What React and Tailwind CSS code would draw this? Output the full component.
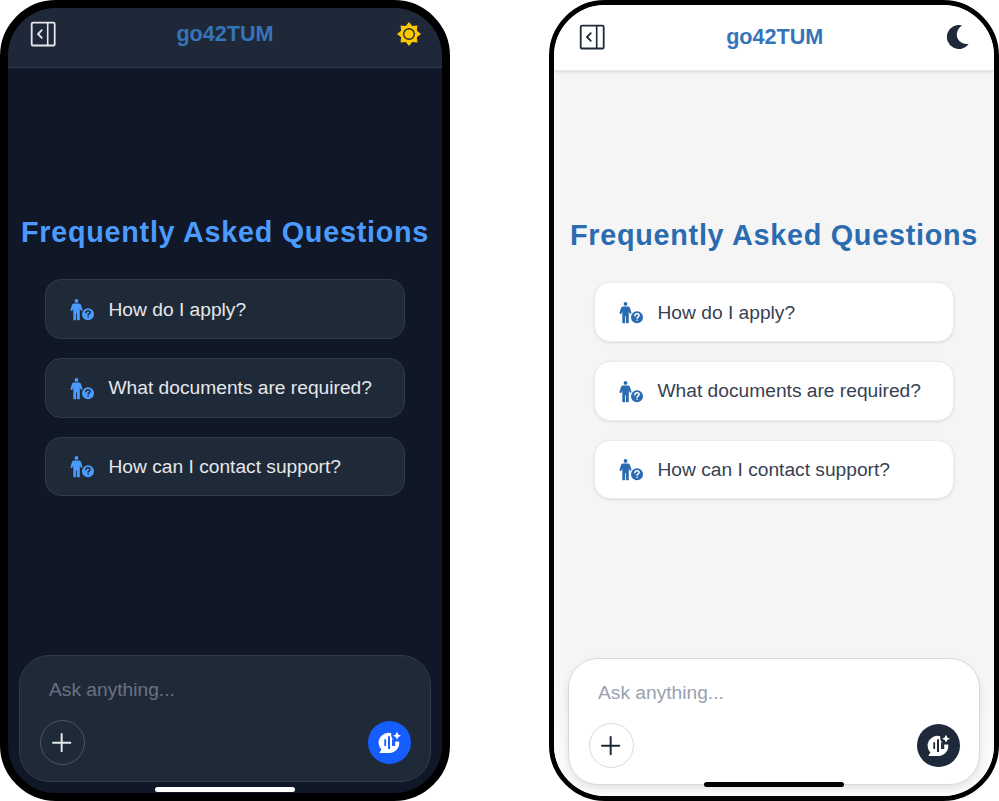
import React from "react";
import { GoPlus } from "react-icons/go";

const questions = ["How do I apply?", "What documents are required?", "How can I contact support?"];

const themes = {
  dark: {
    frame: "border-8 bg-[#101726]",
    header: "h-[60px] border-b border-[#2e3a4b] bg-[#1f2838] px-[23px] pb-[8px]",
    toggle: "text-[#e5e7eb]",
    heading: "mt-[145px] text-[#4b9bff]",
    card: "border-[#303c4c] bg-[#1f2a38] text-[#e5e7eb]",
    icon: "text-[#4b9bff]",
    mark: "stroke-[#1f2a38]",
    footer: "px-[11px] pb-[11px]",
    input: "border-[#303c4c] bg-[#1f2a38]",
    placeholder: "text-[#6a7282]",
    plus: "border-[#4a5565] text-[#e5e7eb]",
    voice: "bg-[#155dfc]",
    bar: "bottom-[1px] bg-white",
  },
  light: {
    frame: "border-[5px] bg-[#f5f5f5]",
    header: "h-[66px] border-b border-[#e8eaed] bg-white px-[26px] pb-[2px] shadow-[0_1px_3px_rgba(0,0,0,0.12)]",
    toggle: "text-[#1e2939]",
    heading: "mt-[145px] text-[#2b6cb0]",
    card: "border-[#e9ebee] bg-white text-[#364153] shadow-[0_1px_3px_rgba(0,0,0,0.1)]",
    icon: "text-[#2b6cb0]",
    mark: "stroke-white",
    footer: "bg-linear-to-b from-[#f5f5f5] to-[#fdfdfd] px-[14px] pb-[11px]",
    input: "border-[#d6dae1] bg-white shadow-[0_4px_8px_rgba(0,0,0,0.1)]",
    placeholder: "text-[#99a1af]",
    plus: "border-[#d6d9e0] text-[#1e2939]",
    voice: "bg-[#1e2939]",
    bar: "bottom-[9px] bg-black",
  },
};

function SidebarIcon({ className }) {
  return (
    <svg viewBox="0 0 24 24" fill="none" stroke="currentColor" strokeWidth="1.8" className={className}>
      <rect x="0.7" y="0.7" width="23" height="22.8" rx="1.3" />
      <path d="M16.7 1V23" strokeWidth="1.6" />
      <path d="M10.8 8.2L7 12L10.8 15.8" strokeLinecap="round" strokeLinejoin="round" />
    </svg>
  );
}

function SunIcon({ className }) {
  return (
    <svg viewBox="-12 -12 24 24" fill="currentColor" className={className}>
      <circle r="4.6" />
      <path
        fillRule="evenodd"
        d="M0-12L3.2-7.9L8.4-8.4L7.9-3.2L12 0L7.9 3.2L8.4 8.4L3.2 7.9L0 12L-3.2 7.9L-8.4 8.4L-7.9 3.2L-12 0L-7.9-3.2L-8.4-8.4L-3.2-7.9ZM0-6A6 6 0 1 0 0 6A6 6 0 1 0 0-6Z"
      />
    </svg>
  );
}

function MoonIcon({ className }) {
  return (
    <svg viewBox="0 0 24 24" fill="currentColor" className={className}>
      <path d="M15 .4A12 12 0 1 0 21.7 18.9C15 20 9.8 15.3 9.8 9.6C9.8 5.8 11.8 2.3 15 .4Z" />
    </svg>
  );
}

function PersonQuestionIcon({ className, markClass }) {
  return (
    <svg viewBox="0 0 24 22" fill="currentColor" className={className}>
      <circle cx="6.5" cy="1.9" r="1.9" />
      <path d="M4.3 4.6H8.7C9.9 4.6 10.6 5.1 11 6.1L12.4 10.4C12.8 11.7 11.2 12.3 10.6 11.2L9.8 9.6V20.4A.9 .9 0 0 1 9.4 21.2H7.6A.7 .7 0 0 1 7 20.4V14.3H6.2V20.4A.7 .7 0 0 1 5.6 21.2H3.9A.9 .9 0 0 1 3.3 20.4V9.6L2.5 11.4C1.9 12.6 .1 11.9 .6 10.5L2 6.1C2.4 5.1 3.1 4.6 4.3 4.6Z" />
      <circle cx="18" cy="15.3" r="6" />
      <path
        d="M15.9 13.8C16 12.2 17 11.8 18 11.8C19.2 11.8 20.1 12.5 20.1 13.6C20.1 14.9 18.1 15 18.1 16.3M18.1 18.2V18.3"
        fill="none"
        strokeWidth="1.5"
        strokeLinecap="round"
        className={markClass}
      />
    </svg>
  );
}

function VoiceChatIcon({ className }) {
  return (
    <svg viewBox="0 0 21 21" fill="currentColor" className={className}>
      <path
        fillRule="evenodd"
        d="M12.3 1.2A9.9 9.9 0 0 0 2.4 17.6L.3 20.9H10.3A9.9 9.9 0 0 0 20.2 9.6H16.2V14H14.6V7.6C12.8 6.2 11.8 4 12.3 1.2ZM5.3 7.3V13.9H7.1V7.3ZM9 4.3V17H11V4.3ZM13 7.2V14H14.7V7.2Z"
      />
      <path d="M18 -.2L19.3 2.4L22 3.7L19.3 5L18 7.6L16.7 5L14 3.7L16.7 2.4Z" />
    </svg>
  );
}

function Phone({ mode }) {
  const t = themes[mode];
  return (
    <section className={`relative flex h-[801px] w-[450px] flex-col overflow-hidden rounded-[56px] border-black ${t.frame}`}>
      <header className={`flex shrink-0 items-center justify-between ${t.header}`}>
        <SidebarIcon className={`size-6 overflow-visible ${t.toggle}`} />
        <h1 className="mr-[2px] text-[21.6px] leading-[30px] font-bold text-[#3674b9]">go42TUM</h1>
        {mode === "dark" ? (
          <SunIcon className="-mr-[2px] size-6 text-[#fdc700]" />
        ) : (
          <MoonIcon className="-mr-[3.5px] size-6 text-[#1e2939]" />
        )}
      </header>

      <main className="flex flex-1 flex-col items-center">
        <h2 className={`text-[28.8px] leading-[38px] font-bold tracking-[0.72px] whitespace-nowrap ${t.heading}`}>
          Frequently Asked Questions
        </h2>
        <ul className="mt-[28px] flex w-[360px] flex-col gap-[19px]">
          {questions.map((q) => (
            <li key={q} className={`flex h-[59.8px] items-center gap-[14.5px] rounded-[16px] border px-6 ${t.card}`}>
              <PersonQuestionIcon className={`mt-[2px] h-[22px] w-6 ${t.icon}`} markClass={t.mark} />
              <span className="pt-[2px] text-[19.2px]">{q}</span>
            </li>
          ))}
        </ul>
      </main>

      <footer className={`shrink-0 ${t.footer}`}>
        <div className={`flex h-[127px] flex-col justify-between rounded-[30px] border pt-[20px] pr-[19px] pb-[16px] pl-[19px] ${t.input}`}>
          <p className={`pl-[10px] text-[19.2px] leading-[28px] ${t.placeholder}`}>Ask anything...</p>
          <div className="flex items-center justify-between">
            <button className={`ml-[0.5px] flex size-[45px] items-center justify-center rounded-full border ${t.plus}`}>
              <GoPlus className="size-[32px] shrink-0" />
            </button>
            <button className={`flex size-[43px] items-center justify-center rounded-full text-white ${t.voice}`}>
              <VoiceChatIcon className="size-[21px] overflow-visible" />
            </button>
          </div>
        </div>
      </footer>
      <div className={`absolute left-1/2 h-[5px] w-[140px] -translate-x-1/2 rounded-full ${t.bar}`} />
    </section>
  );
}

export default function App() {
  return (
    <div className="flex h-[801px] w-[999px] justify-between overflow-hidden bg-white font-['Liberation_Sans',Arial,sans-serif]">
      <Phone mode="dark" />
      <Phone mode="light" />
    </div>
  );
}
